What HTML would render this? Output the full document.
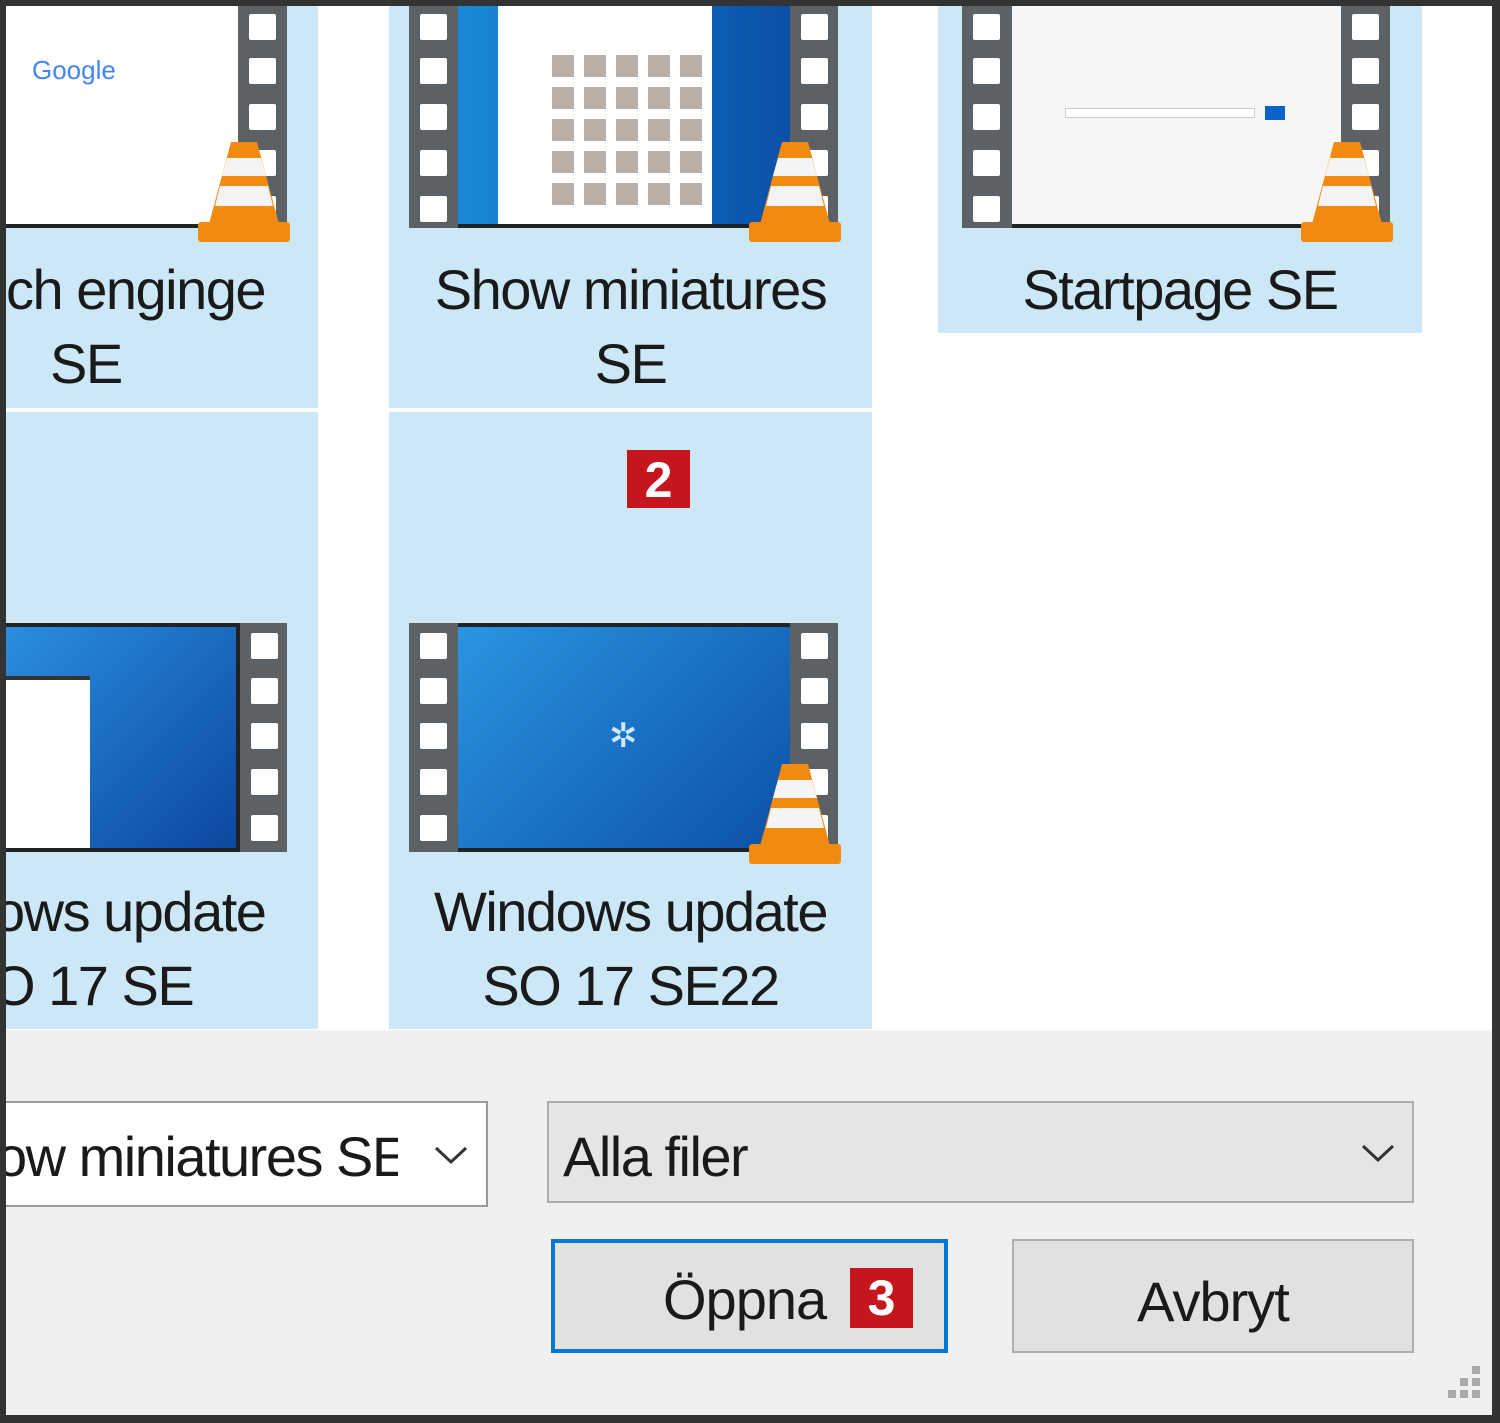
<!DOCTYPE html>
<html><head><meta charset="utf-8"><style>
*{margin:0;padding:0;box-sizing:border-box}
body{width:1500px;height:1423px;position:relative;overflow:hidden;background:#fff;font-family:"Liberation Sans",sans-serif;color:#1a1a1a}
.a{position:absolute}
.tile{position:absolute;background:#cce8f7}
.t{position:absolute;font-size:56px;letter-spacing:-1.5px;white-space:nowrap;line-height:1}
.strip{position:absolute;background:#5c6166}
.strip i{position:absolute;left:11px;width:27px;height:26px;background:#fff;border-radius:2px}
.badge{position:absolute;background:#c4161c;color:#fff;font-weight:bold;font-size:50px;text-align:center;line-height:60px}
.btn{position:absolute;background:#e1e1e1;border:2px solid #adadad;font-size:56px;letter-spacing:-1px}
</style></head><body>
<!-- frame -->
<div class="a" style="left:0;top:0;width:1500px;height:6px;background:#333"></div>
<div class="a" style="left:0;top:0;width:6px;height:1423px;background:#333"></div>
<div class="a" style="right:0;top:0;width:8px;height:1423px;background:#333"></div>
<div class="a" style="left:0;bottom:0;width:1500px;height:8px;background:#333"></div>

<!-- tiles -->
<div class="tile" style="left:6px;top:6px;width:312px;height:402px"></div>
<div class="tile" style="left:389px;top:6px;width:483px;height:402px"></div>
<div class="tile" style="left:938px;top:6px;width:484px;height:327px"></div>
<div class="tile" style="left:6px;top:412px;width:312px;height:617px"></div>
<div class="tile" style="left:389px;top:412px;width:483px;height:617px"></div>

<!-- col1 top thumb -->
<div class="a" style="left:6px;top:6px;width:232px;height:222px;background:#fff;border-bottom:4px solid #222"></div>
<div class="a" style="left:32px;top:55px;font-size:26px;color:#4285f4">Google</div>
<div class="strip" style="left:238px;top:6px;width:49px;height:222px"><i style="top:8px"></i><i style="top:52px"></i><i style="top:98px"></i><i style="top:144px"></i><i style="top:190px"></i></div>

<!-- col2 top thumb -->
<div class="strip" style="left:409px;top:6px;width:49px;height:222px"><i style="top:8px"></i><i style="top:52px"></i><i style="top:98px"></i><i style="top:144px"></i><i style="top:190px"></i></div>
<div class="a" style="left:458px;top:6px;width:332px;height:222px;background:linear-gradient(90deg,#1a8ad8,#0a4fa8);border-bottom:4px solid #222"></div>
<div class="a" style="left:498px;top:6px;width:214px;height:218px;background:#fff"></div>
<div class="a" style="left:552px;top:45px;width:155px;height:160px;background:repeating-linear-gradient(90deg,#8a7a6a 0 22px,#fff 22px 32px);opacity:.6"></div>
<div class="a" style="left:552px;top:45px;width:155px;height:160px;background:repeating-linear-gradient(0deg,transparent 0 22px,#fff 22px 32px)"></div>
<div class="strip" style="left:790px;top:6px;width:48px;height:222px"><i style="top:8px"></i><i style="top:52px"></i><i style="top:98px"></i><i style="top:144px"></i><i style="top:190px"></i></div>

<!-- col3 top thumb -->
<div class="strip" style="left:962px;top:6px;width:50px;height:222px"><i style="top:8px"></i><i style="top:52px"></i><i style="top:98px"></i><i style="top:144px"></i><i style="top:190px"></i></div>
<div class="a" style="left:1012px;top:6px;width:329px;height:222px;background:#f6f6f6;border-bottom:4px solid #222"></div>
<div class="a" style="left:1065px;top:108px;width:190px;height:10px;border:1px solid #ccc;background:#fff"></div>
<div class="a" style="left:1265px;top:106px;width:20px;height:14px;background:#0a64c8"></div>
<div class="strip" style="left:1341px;top:6px;width:49px;height:222px"><i style="top:8px"></i><i style="top:52px"></i><i style="top:98px"></i><i style="top:144px"></i><i style="top:190px"></i></div>

<!-- row2 thumbs -->
<div class="a" style="left:6px;top:623px;width:234px;height:229px;background:linear-gradient(135deg,#2a8ee0,#0c48a0);border:4px solid #222;border-left:none"></div>
<div class="a" style="left:6px;top:676px;width:84px;height:172px;background:#fff;border-top:4px solid #333"></div>
<div class="strip" style="left:240px;top:623px;width:47px;height:229px"><i style="top:10px"></i><i style="top:55px"></i><i style="top:100px"></i><i style="top:146px"></i><i style="top:192px"></i></div>
<div class="strip" style="left:409px;top:623px;width:49px;height:229px"><i style="top:10px"></i><i style="top:55px"></i><i style="top:100px"></i><i style="top:146px"></i><i style="top:192px"></i></div>
<div class="a" style="left:458px;top:623px;width:332px;height:229px;background:linear-gradient(135deg,#2a95e2,#0c50a8);border:4px solid #222;border-left:none;border-right:none"></div>
<div class="a" style="left:609px;top:716px;font-size:34px;color:#cfe8ff">✲</div>
<div class="strip" style="left:790px;top:623px;width:48px;height:229px"><i style="top:10px"></i><i style="top:55px"></i><i style="top:100px"></i><i style="top:146px"></i><i style="top:192px"></i></div>

<!-- VLC cones -->
<svg class="a" style="left:198px;top:138px" width="92" height="104" viewBox="0 0 92 104"><path d="M33 4h26l22 82H11z" fill="#f08a10"/><path d="M29 20h34l5 18H24zM22 48h48l5 20H17z" fill="#f4f4f4"/><rect x="0" y="84" width="92" height="20" rx="3" fill="#f08a10"/></svg>
<svg class="a" style="left:749px;top:138px" width="92" height="104" viewBox="0 0 92 104"><path d="M33 4h26l22 82H11z" fill="#f08a10"/><path d="M29 20h34l5 18H24zM22 48h48l5 20H17z" fill="#f4f4f4"/><rect x="0" y="84" width="92" height="20" rx="3" fill="#f08a10"/></svg>
<svg class="a" style="left:1301px;top:138px" width="92" height="104" viewBox="0 0 92 104"><path d="M33 4h26l22 82H11z" fill="#f08a10"/><path d="M29 20h34l5 18H24zM22 48h48l5 20H17z" fill="#f4f4f4"/><rect x="0" y="84" width="92" height="20" rx="3" fill="#f08a10"/></svg>
<svg class="a" style="left:749px;top:760px" width="92" height="104" viewBox="0 0 92 104"><path d="M33 4h26l22 82H11z" fill="#f08a10"/><path d="M29 20h34l5 18H24zM22 48h48l5 20H17z" fill="#f4f4f4"/><rect x="0" y="84" width="92" height="20" rx="3" fill="#f08a10"/></svg>

<!-- labels -->
<div class="t" style="left:6px;top:262px">ch enginge</div>
<div class="t" style="left:50px;top:336px">SE</div>
<div class="t" style="left:389px;width:483px;text-align:center;top:262px">Show miniatures</div>
<div class="t" style="left:389px;width:483px;text-align:center;top:336px">SE</div>
<div class="t" style="left:938px;width:484px;text-align:center;top:262px">Startpage SE</div>
<div class="a" style="left:6px;top:884px;width:312px;height:130px;overflow:hidden"><div class="t" style="left:-12px;top:0">ows update</div><div class="t" style="left:-14px;top:74px">O 17 SE</div></div>
<div class="t" style="left:389px;width:483px;text-align:center;top:884px">Windows update</div>
<div class="t" style="left:389px;width:483px;text-align:center;top:958px">SO 17 SE22</div>

<div class="badge" style="left:627px;top:450px;width:63px;height:58px">2</div>

<!-- bottom -->
<div class="a" style="left:6px;top:1030px;width:1486px;height:385px;background:#f0f0f0"></div>
<div class="a" style="left:6px;top:1101px;width:482px;height:106px;background:#fff;border:2px solid #9a9a9a;border-left:none;overflow:hidden"><div class="t" style="left:-10px;top:26px">ow miniatures SE</div><div class="a" style="left:392px;top:0;width:88px;height:104px;background:#fff"></div><svg class="a" style="left:428px;top:42px" width="34" height="20"><path d="M2 3l15 14 15-14" stroke="#333" stroke-width="3" fill="none"/></svg></div>
<div class="a" style="left:547px;top:1101px;width:867px;height:102px;background:#e5e5e5;border:2px solid #adadad"><div class="t" style="left:14px;top:26px">Alla filer</div><svg class="a" style="left:812px;top:40px" width="34" height="20"><path d="M2 3l15 14 15-14" stroke="#333" stroke-width="3" fill="none"/></svg></div>
<div class="btn" style="left:551px;top:1239px;width:397px;height:114px;border:4px solid #0078d7"><span class="a" style="left:108px;top:24px">Öppna</span></div>
<div class="badge" style="left:850px;top:1268px;width:63px;height:60px">3</div>
<div class="btn" style="left:1012px;top:1239px;width:402px;height:114px"><span class="a" style="left:0;width:398px;text-align:center;top:28px">Avbryt</span></div>
<svg class="a" style="left:1436px;top:1362px" width="48" height="48"><g fill="#aaa"><rect x="36" y="4" width="8" height="8"/><rect x="24" y="16" width="8" height="8"/><rect x="36" y="16" width="8" height="8"/><rect x="12" y="28" width="8" height="8"/><rect x="24" y="28" width="8" height="8"/><rect x="36" y="28" width="8" height="8"/></g></svg>
</body></html>
